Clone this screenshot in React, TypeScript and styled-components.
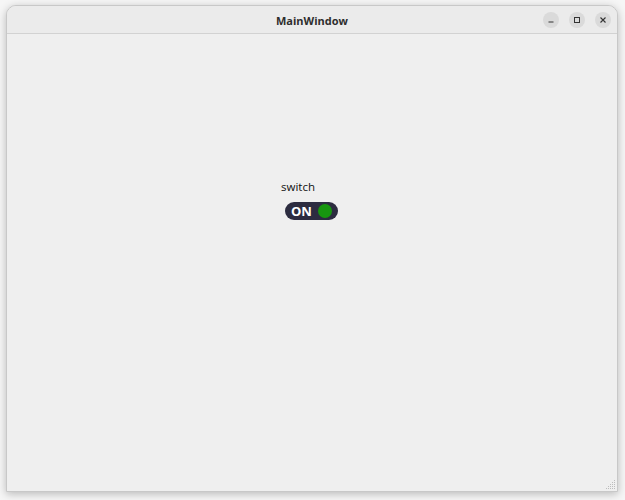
import React from "react";
import styled, { createGlobalStyle } from "styled-components";

const Global = createGlobalStyle`
  html, body { margin: 0; padding: 0; background: #f6f6f6; }
  body { font-family: "Open Sans", "DejaVu Sans", sans-serif; }
`;

const Screen = styled.div`
  width: 625px;
  height: 500px;
  box-sizing: border-box;
  padding: 5px 7px 8px 6px;
  display: flex;
`;

const Window = styled.div`
  flex: 1;
  display: flex;
  flex-direction: column;
  background: #efefef;
  border: 1px solid #c8c8c8;
  border-radius: 10px 10px 0 0;
  box-shadow: 0 2px 8px rgba(0, 0, 0, 0.25);
  overflow: hidden;
`;

const TitleBar = styled.div`
  height: 28px;
  padding-top: 1px;
  box-sizing: border-box;
  display: flex;
  align-items: center;
  justify-content: center;
  position: relative;
  background: #ebebeb;
  border-bottom: 1px solid #d2d2d2;
`;

const Title = styled.span`
  font-family: "Open Sans", sans-serif;
  font-weight: bold;
  font-size: 11px;
  color: #2e2e2e;
`;

const Controls = styled.div`
  position: absolute;
  right: 6px;
  top: 6px;
  display: flex;
  gap: 10px;
`;

const CtrlButton = styled.div`
  width: 16px;
  height: 16px;
  border-radius: 50%;
  background: #dadada;
  display: flex;
  align-items: center;
  justify-content: center;
`;

const Content = styled.div`
  flex: 1;
  display: flex;
  flex-direction: column;
  align-items: flex-start;
  padding: 145px 0 0 274px;
  gap: 8px;
  position: relative;
`;

const Label = styled.span`
  font-family: "Open Sans", sans-serif;
  font-size: 11.5px;
  color: #111;
`;

const Switch = styled.div`
  margin-left: 4px;
  width: 53px;
  height: 18px;
  border-radius: 9px;
  background: #2c2c40;
  display: flex;
  align-items: center;
  justify-content: space-between;
  padding: 0 6px 0 6px;
  box-sizing: border-box;
`;

const SwitchText = styled.span`
  font-family: "Open Sans", sans-serif;
  font-weight: bold;
  font-size: 13px;
  color: #ffffff;
`;

const Knob = styled.div`
  width: 14px;
  height: 14px;
  border-radius: 50%;
  background: #17960f;
`;

const Grip = styled.svg`
  position: absolute;
  right: 1px;
  bottom: 1px;
`;

export default function App() {
  return (
    <>
      <Global />
      <Screen>
        <Window>
          <TitleBar>
            <Title>MainWindow</Title>
            <Controls>
              <CtrlButton>
                <svg width="8" height="8" viewBox="0 0 8 8">
                  <line x1="1.5" y1="6" x2="6.5" y2="6" stroke="#333" strokeWidth="1" />
                </svg>
              </CtrlButton>
              <CtrlButton>
                <svg width="8" height="8" viewBox="0 0 8 8">
                  <rect x="1.5" y="1.5" width="5" height="5" fill="none" stroke="#333" strokeWidth="1" />
                </svg>
              </CtrlButton>
              <CtrlButton>
                <svg width="8" height="8" viewBox="0 0 8 8">
                  <path d="M1.5 1.5 L6.5 6.5 M6.5 1.5 L1.5 6.5" stroke="#333" strokeWidth="1.1" />
                </svg>
              </CtrlButton>
            </Controls>
          </TitleBar>
          <Content>
            <Label>switch</Label>
            <Switch>
              <SwitchText>ON</SwitchText>
              <Knob />
            </Switch>
            <Grip width="10" height="10" viewBox="0 0 10 10">
              <g fill="#bdbdbd">
                <rect x="8" y="0" width="1" height="1" />
                <rect x="6" y="2" width="1" height="1" />
                <rect x="8" y="2" width="1" height="1" />
                <rect x="4" y="4" width="1" height="1" />
                <rect x="6" y="4" width="1" height="1" />
                <rect x="8" y="4" width="1" height="1" />
                <rect x="2" y="6" width="1" height="1" />
                <rect x="4" y="6" width="1" height="1" />
                <rect x="6" y="6" width="1" height="1" />
                <rect x="8" y="6" width="1" height="1" />
                <rect x="0" y="8" width="1" height="1" />
                <rect x="2" y="8" width="1" height="1" />
                <rect x="4" y="8" width="1" height="1" />
                <rect x="6" y="8" width="1" height="1" />
                <rect x="8" y="8" width="1" height="1" />
              </g>
            </Grip>
          </Content>
        </Window>
      </Screen>
    </>
  );
}
